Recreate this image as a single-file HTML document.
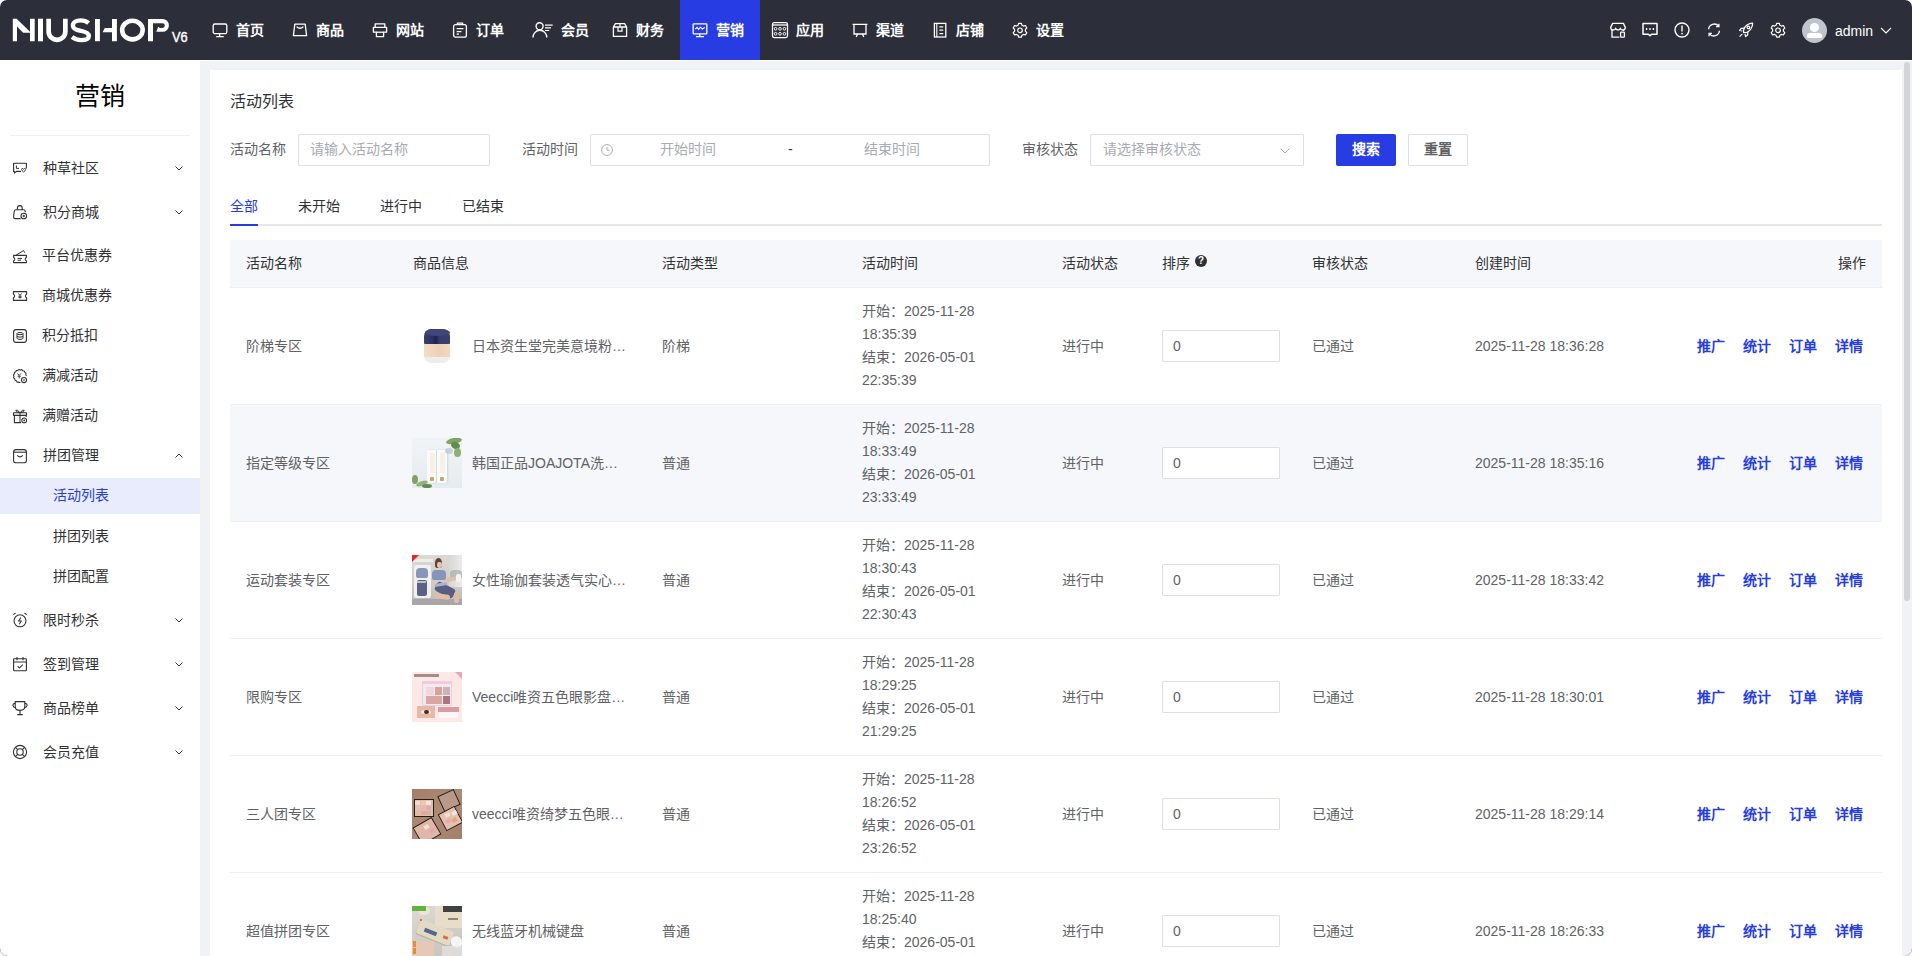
<!DOCTYPE html>
<html lang="zh-CN"><head><meta charset="utf-8">
<style>
*{box-sizing:border-box;margin:0;padding:0}
html,body{width:1912px;height:956px;overflow:hidden;background:#fff;font-family:"Liberation Sans",sans-serif;font-size:14px;color:#303133}
.a{position:absolute;white-space:nowrap}
.hdr{position:absolute;left:0;top:0;width:1912px;height:60px;background:#2c2f3a;border-radius:7px 7px 0 0;overflow:hidden}
.nt{position:absolute;top:20px;line-height:20px;color:#fff;font-weight:bold;font-size:14px}
.side{position:absolute;left:0;top:60px;width:200px;height:896px;background:#fff;border-radius:0 0 0 7px}
.mt{position:absolute;line-height:20px;font-size:14px;color:#303133;white-space:nowrap}
.main{position:absolute;left:200px;top:61px;width:1712px;height:895px;background:#f0f2f5}
.card{position:absolute;left:210px;top:70px;width:1692px;height:886px;background:#fff}
.lbl{position:absolute;line-height:20px;font-size:14px;color:#606266;white-space:nowrap}
.inp{position:absolute;height:32px;border:1px solid #dcdfe6;border-radius:1px;background:#fff}
.ph{position:absolute;line-height:20px;font-size:14px;color:#a8abb2;white-space:nowrap}
.th{position:absolute;top:253px;line-height:20px;font-size:14px;color:#303133;font-weight:normal;white-space:nowrap}
.td{position:absolute;line-height:20px;font-size:14px;color:#606266;white-space:nowrap}
.op{position:absolute;line-height:20px;font-size:14px;color:#273de3;font-weight:bold;white-space:nowrap}
</style></head><body>
<div class="hdr"><div style="position:absolute;left:680px;top:0;width:80px;height:60px;background:#273de3"></div><svg style="position:absolute;left:0;top:0" width="200" height="60" viewBox="0 0 200 60"><path fill="#fff" d="M12.8 18.7H16.6L30 31.7V18.7H34.7V41.3H30V32.8H23.2L17 26.4V41.3H12.8Z"/><rect fill="#fff" x="38" y="18.7" width="5" height="22.6"/><path fill="#fff" d="M46.3 18.7H51V31.5A6 6 0 0 0 63 31.5V18.7H67.7V31.5A10.7 10.7 0 0 1 46.3 31.5Z"/><path fill="none" stroke="#fff" stroke-width="4.4" d="M88.6 23.2C86.5 21.4 83.6 20.4 80.6 20.4C76 20.4 72.9 22.4 72.9 25.7C72.9 29 76.5 30 80.8 30.8C85.2 31.6 88.8 32.6 88.8 36C88.8 39 85.5 40.1 81 40.1C77.5 40.1 74.6 39.1 72 37.1"/><rect fill="#fff" x="95" y="19" width="4.9" height="22.2"/><path fill="#fff" d="M102.6 32.3L104.8 27.9H112V19H116.9V41.2H112V32.3Z"/><ellipse cx="132.4" cy="30.05" rx="10.25" ry="9.35" fill="none" stroke="#fff" stroke-width="4.6"/><path fill="#fff" d="M148 19H162.5A6.4 6.4 0 0 1 162.5 31.8H156.2L158.3 26.8L159.8 27.9H162.5A2.35 2.35 0 0 0 162.5 23.2H153V41.2H148Z"/><text x="172" y="41.6" fill="#fff" stroke="#fff" stroke-width="0.45" font-family="Liberation Sans" font-size="14.4" textLength="15.6" lengthAdjust="spacingAndGlyphs">V6</text></svg><svg style="position:absolute;left:212px;top:22px;width:16px;height:16px;overflow:visible" viewBox="0 0 16 16" ><rect x="1.2" y="2" width="13.6" height="9.6" rx="1.6" fill="none" stroke="#fff" stroke-width="1.3"/><path d="M7.7 11.6V14.2M4.2 14.6H11.8" stroke="#fff" stroke-width="1.3" fill="none"/></svg><div class="nt" style="left:236px">首页</div><svg style="position:absolute;left:292px;top:22px;width:16px;height:16px;overflow:visible" viewBox="0 0 16 16" ><path d="M2.8 2.2H13.2L14.6 13.6H1.4Z" fill="none" stroke="#fff" stroke-width="1.3" stroke-linejoin="round"/><path d="M4.6 4.6Q8 8 11.4 4.6" fill="none" stroke="#fff" stroke-width="1.3"/></svg><div class="nt" style="left:316px">商品</div><svg style="position:absolute;left:372px;top:22px;width:16px;height:16px;overflow:visible" viewBox="0 0 16 16" ><path d="M3.2 5.4V1.8H12.8V5.4M1.4 5.4H14.6V10.2H11.6V14.6H4.4V10.2H1.4Z" fill="none" stroke="#fff" stroke-width="1.3" stroke-linejoin="round"/><path d="M4.4 10.2H11.6" stroke="#fff" stroke-width="1.3"/></svg><div class="nt" style="left:396px">网站</div><svg style="position:absolute;left:452px;top:22px;width:16px;height:16px;overflow:visible" viewBox="0 0 16 16" ><rect x="1.6" y="2.6" width="12.8" height="12.6" rx="2" fill="none" stroke="#fff" stroke-width="1.3"/><path d="M5.4 2.6V1.2H10.6V2.6M4.6 6.6H11.4M4.6 9.6H9.4M4.6 12.2H7" fill="none" stroke="#fff" stroke-width="1.3"/></svg><div class="nt" style="left:476px">订单</div><svg style="position:absolute;left:532px;top:22px;width:16px;height:16px;overflow:visible" viewBox="0 0 16 16" ><circle cx="7.6" cy="4.2" r="3.5" fill="none" stroke="#fff" stroke-width="1.4"/><path d="M1 15.6A6.9 7.4 0 0 1 14.8 15.6" fill="none" stroke="#fff" stroke-width="1.4"/><path d="M13 3.1H20.7M13 5.9H19M13 8.5H17.2" fill="none" stroke="#fff" stroke-width="1.2"/></svg><div class="nt" style="left:560.5px">会员</div><svg style="position:absolute;left:612px;top:22px;width:16px;height:16px;overflow:visible" viewBox="0 0 16 16" ><path d="M1.4 5L3.4 1.6H12.6L14.6 5V14.4H1.4Z M1.4 5H14.6" fill="none" stroke="#fff" stroke-width="1.3" stroke-linejoin="round"/><path d="M6 5V9.2H10V5M8 1.6V5" fill="none" stroke="#fff" stroke-width="1.2"/></svg><div class="nt" style="left:636px">财务</div><svg style="position:absolute;left:692px;top:22px;width:16px;height:16px;overflow:visible" viewBox="0 0 16 16" ><rect x="1.2" y="1.8" width="13.6" height="10" rx="0.6" fill="none" stroke="#fff" stroke-width="1.3"/><path d="M3.2 7.2L5 5.4L6.6 7.4L8.4 5.2L10.4 7L12.8 5.4" fill="none" stroke="#fff" stroke-width="1.1"/><path d="M7.8 11.8V14M4 14.6H12" stroke="#fff" stroke-width="1.3"/></svg><div class="nt" style="left:716px">营销</div><svg style="position:absolute;left:772px;top:22px;width:16px;height:16px;overflow:visible" viewBox="0 0 16 16" ><rect x="0.5" y="0.6" width="15" height="15" rx="1.8" fill="none" stroke="#fff" stroke-width="1.3"/><path d="M0.5 3H15.5" stroke="#fff" stroke-width="1.3"/><g fill="none" stroke="#fff" stroke-width="0.95"><circle cx="3.6" cy="6.8" r="1.35"/><circle cx="8" cy="6.8" r="1.35"/><circle cx="12.4" cy="6.8" r="1.35"/><circle cx="3.6" cy="11.8" r="1.35"/><circle cx="8" cy="11.8" r="1.35"/><circle cx="12.4" cy="11.8" r="1.35"/></g></svg><div class="nt" style="left:796px">应用</div><svg style="position:absolute;left:852px;top:22px;width:16px;height:16px;overflow:visible" viewBox="0 0 16 16" ><path d="M0.6 2.4H15.4M2 2.4V12H14V2.4M5.6 12L4.2 15M10.4 12L11.8 15" fill="none" stroke="#fff" stroke-width="1.3"/></svg><div class="nt" style="left:876px">渠道</div><svg style="position:absolute;left:932px;top:22px;width:16px;height:16px;overflow:visible" viewBox="0 0 16 16" ><rect x="2.4" y="1.4" width="11.4" height="13.6" fill="none" stroke="#fff" stroke-width="1.3"/><path d="M4.8 1.4V15" stroke="#fff" stroke-width="1.1"/><path d="M7.4 4.8H11.2M7.4 8.2H11.2M7.4 11.6H11.2" stroke="#fff" stroke-width="1.2"/></svg><div class="nt" style="left:956px">店铺</div><svg style="position:absolute;left:1012px;top:22px;width:16px;height:16px;overflow:visible" viewBox="0 0 16 16" ><path d="M6.6 1.3H9.4L9.9 3.2L11.5 4.1L13.4 3.5L14.8 6L13.4 7.4V9.2L14.8 10.6L13.4 13L11.5 12.4L9.9 13.3L9.4 15.2H6.6L6.1 13.3L4.5 12.4L2.6 13L1.2 10.6L2.6 9.2V7.4L1.2 6L2.6 3.5L4.5 4.1L6.1 3.2Z" fill="none" stroke="#fff" stroke-width="1.2" stroke-linejoin="round"/><circle cx="8" cy="8.3" r="2.3" fill="none" stroke="#fff" stroke-width="1.2"/></svg><div class="nt" style="left:1036px">设置</div><svg style="position:absolute;left:1610px;top:22px;width:16px;height:16px;overflow:visible" viewBox="0 0 16 16" ><path d="M2.6 1.4H13.4L15.4 5.6Q15 8 12.8 8Q10.6 8 10.4 6.2Q10 8 8 8Q6 8 5.6 6.2Q5.4 8 3.2 8Q1 8 0.6 5.6Z" fill="none" stroke="#fff" stroke-width="1.3" stroke-linejoin="round"/><path d="M2 8V15.2H9.4M13.6 8V9" fill="none" stroke="#fff" stroke-width="1.3"/><rect x="10.6" y="10.2" width="3.8" height="5" rx="0.6" fill="none" stroke="#fff" stroke-width="1.3"/></svg><svg style="position:absolute;left:1642px;top:22px;width:16px;height:16px;overflow:visible" viewBox="0 0 16 16" ><path d="M1 1.6H15V12.2H9.6L8 13.8L6.4 12.2H1Z" fill="none" stroke="#fff" stroke-width="1.5" stroke-linejoin="round"/><circle cx="4.6" cy="7" r="0.9" fill="#fff"/><circle cx="8" cy="7" r="0.9" fill="#fff"/><circle cx="11.4" cy="7" r="0.9" fill="#fff"/></svg><svg style="position:absolute;left:1674px;top:22px;width:16px;height:16px;overflow:visible" viewBox="0 0 16 16" ><circle cx="8" cy="8" r="7" fill="none" stroke="#fff" stroke-width="1.4"/><path d="M8 3.6V9.6" stroke="#fff" stroke-width="1.4"/><circle cx="8" cy="11.6" r="0.9" fill="#fff"/></svg><svg style="position:absolute;left:1706px;top:22px;width:16px;height:16px;overflow:visible" viewBox="0 0 16 16" ><path d="M2.6 7.2A5.6 5.6 0 0 1 12.6 4.2M13.4 8.8A5.6 5.6 0 0 1 3.4 11.8" fill="none" stroke="#fff" stroke-width="1.3"/><path d="M12.9 1.8V4.6H10.1M3.1 14.2V11.4H5.9" fill="none" stroke="#fff" stroke-width="1.3"/></svg><svg style="position:absolute;left:1738px;top:22px;width:16px;height:16px;overflow:visible" viewBox="0 0 16 16" ><path d="M5.6 10.6Q5 6 9 3Q12 1 14.6 1.2Q14.8 4 12.8 7Q10 11 5.6 10.6Z" fill="none" stroke="#fff" stroke-width="1.3" stroke-linejoin="round"/><circle cx="10.4" cy="5.4" r="1.3" fill="none" stroke="#fff" stroke-width="1.2"/><path d="M6.2 6.2L3.2 6.4L1.6 8.4L4.4 9M9.8 10L9.6 13L7.6 14.6L7 11.8M4.4 11.8L1.6 14.6" fill="none" stroke="#fff" stroke-width="1.2" stroke-linejoin="round"/></svg><svg style="position:absolute;left:1770px;top:22px;width:16px;height:16px;overflow:visible" viewBox="0 0 16 16" ><path d="M6.6 1.3H9.4L9.9 3.2L11.5 4.1L13.4 3.5L14.8 6L13.4 7.4V9.2L14.8 10.6L13.4 13L11.5 12.4L9.9 13.3L9.4 15.2H6.6L6.1 13.3L4.5 12.4L2.6 13L1.2 10.6L2.6 9.2V7.4L1.2 6L2.6 3.5L4.5 4.1L6.1 3.2Z" fill="none" stroke="#fff" stroke-width="1.2" stroke-linejoin="round"/><circle cx="8" cy="8.3" r="2.3" fill="none" stroke="#fff" stroke-width="1.2"/></svg><div style="position:absolute;left:1802px;top:17.5px;width:25px;height:25px;border-radius:50%;background:#c0c4cc;overflow:hidden"><div style="position:absolute;left:8px;top:5px;width:9px;height:9px;border-radius:50%;background:#fff"></div><div style="position:absolute;left:5px;top:15.5px;width:15px;height:5px;border-radius:3px 3px 1px 1px;background:#fff"></div></div><div class="a" style="left:1835px;top:20.5px;line-height:20px;color:#fff;font-size:14px">admin</div><svg style="position:absolute;left:1880px;top:27px;width:12px;height:7px;overflow:visible" viewBox="0 0 12 7" ><path d="M1 1L6 6L11 1" fill="none" stroke="#fff" stroke-width="1.2"/></svg></div><div class="side"><div class="a" style="left:0;top:0;width:200px;text-align:center;font-size:25px;line-height:36px;top:18px;color:#000">营销</div><div style="position:absolute;left:10px;top:75px;width:180px;height:1px;background:#ebeef5"></div></div><div style="position:absolute;left:0;top:478px;width:200px;height:36px;background:#e9ecfc"></div><svg style="position:absolute;left:12px;top:160.8px;width:16px;height:16px;overflow:visible" viewBox="0 0 16 16" ><path d="M9 10.4H4.4L2.4 12.2V10.4H1.6V2.2H14.4V7.4" fill="none" stroke="#303133" stroke-width="1.1" stroke-linejoin="round"/><path d="M4.4 4.6V7.4H7" fill="none" stroke="#303133" stroke-width="1"/><path d="M9.6 8.4Q9.6 7.2 10.8 7.6L11.6 8.2L12.4 7.6Q13.6 7.2 13.6 8.4Q13.6 9.6 11.6 11Q9.6 9.6 9.6 8.4Z" fill="none" stroke="#303133" stroke-width="1"/></svg><div class="mt" style="left:43px;top:158.0px">种草社区</div><svg style="position:absolute;left:175px;top:166.0px;width:8px;height:5px;overflow:visible" viewBox="0 0 8 5" ><path d="M0.5 0.5L4 4L7.5 0.5" fill="none" stroke="#303133" stroke-width="1"/></svg><svg style="position:absolute;left:12px;top:204.3px;width:16px;height:16px;overflow:visible" viewBox="0 0 16 16" ><path d="M8.6 14.6H3.2Q1.6 14.6 1.6 13L2.2 7.4Q2.4 5.8 4 5.8H11.6Q13 5.8 13.2 7.2L13.3 8.2M5.4 5.8V4Q5.4 1.6 7.8 1.6Q10.2 1.6 10.2 4V5.8" fill="none" stroke="#303133" stroke-width="1.1"/><circle cx="11.8" cy="12" r="2.8" fill="none" stroke="#303133" stroke-width="1.1"/><path d="M11.8 10.8V13.2M10.6 12H13" stroke="#303133" stroke-width="1"/></svg><div class="mt" style="left:43px;top:201.5px">积分商城</div><svg style="position:absolute;left:175px;top:209.5px;width:8px;height:5px;overflow:visible" viewBox="0 0 8 5" ><path d="M0.5 0.5L4 4L7.5 0.5" fill="none" stroke="#303133" stroke-width="1"/></svg><svg style="position:absolute;left:12px;top:247.8px;width:16px;height:16px;overflow:visible" viewBox="0 0 16 16" ><path d="M1.6 7.4H14.4V9.6Q13.2 10 13.2 11.2Q13.2 12.4 14.4 12.8V14.6H1.6V12.8Q2.8 12.4 2.8 11.2Q2.8 10 1.6 9.6Z" fill="none" stroke="#303133" stroke-width="1.1" stroke-linejoin="round"/><path d="M3.6 7.4L11.6 2.6L12.8 4.8M5.6 10.4H10M5.6 12.2H9" fill="none" stroke="#303133" stroke-width="1"/></svg><div class="mt" style="left:41.5px;top:245.0px">平台优惠券</div><svg style="position:absolute;left:12px;top:287.8px;width:16px;height:16px;overflow:visible" viewBox="0 0 16 16" ><path d="M1.4 3.6H14.6V6.2Q13.4 6.8 13.4 8Q13.4 9.2 14.6 9.8V12.4H1.4V9.8Q2.6 9.2 2.6 8Q2.6 6.8 1.4 6.2Z" fill="none" stroke="#303133" stroke-width="1.1" stroke-linejoin="round"/><path d="M6.4 5.4L8 7.4L9.6 5.4M8 7.4V10.6M6.4 8.2H9.6M6.4 9.4H9.6" fill="none" stroke="#303133" stroke-width="0.9"/></svg><div class="mt" style="left:41.5px;top:285.0px">商城优惠券</div><svg style="position:absolute;left:12px;top:327.8px;width:16px;height:16px;overflow:visible" viewBox="0 0 16 16" ><rect x="1.6" y="1.6" width="12.8" height="12.8" rx="2.4" fill="none" stroke="#303133" stroke-width="1.1"/><ellipse cx="8" cy="5.6" rx="3" ry="1.1" fill="none" stroke="#303133" stroke-width="1"/><path d="M5 5.6V10.2Q5 11.4 8 11.4Q11 11.4 11 10.2V5.6M5 8Q5 9.1 8 9.1Q11 9.1 11 8" fill="none" stroke="#303133" stroke-width="1"/></svg><div class="mt" style="left:41.5px;top:325.0px">积分抵扣</div><svg style="position:absolute;left:12px;top:367.8px;width:16px;height:16px;overflow:visible" viewBox="0 0 16 16" ><path d="M8.4 14.2Q7.6 14.8 6.6 14L5.2 14.2L4.4 12.8L3 12.2L2.8 10.8L1.6 9.8L2 8.4L1.4 7L2.4 5.8L2.4 4.4L3.8 3.8L4.4 2.4L5.8 2.4L7 1.4L8.4 2L9.8 1.6L10.8 2.8L12.2 3L12.8 4.4L14 5.2L13.8 6.6L14.4 8" fill="none" stroke="#303133" stroke-width="1.05" stroke-linejoin="round"/><path d="M5.4 5.4L7.2 7.4L9 5.4M7.2 7.4V10.4M5.6 8.2H8.8" fill="none" stroke="#303133" stroke-width="0.9"/><circle cx="12" cy="12" r="2.6" fill="none" stroke="#303133" stroke-width="1.05"/><path d="M10.9 12H13.1" stroke="#303133" stroke-width="1"/></svg><div class="mt" style="left:41.5px;top:365.0px">满减活动</div><svg style="position:absolute;left:12px;top:407.8px;width:16px;height:16px;overflow:visible" viewBox="0 0 16 16" ><path d="M9 14.6H2.4V7.4H14.2V9M1.6 4.8H14.4V7.4H1.6Z" fill="none" stroke="#303133" stroke-width="1.1" stroke-linejoin="round"/><path d="M8 4.8V14.6M8 4.8Q5 0.6 3.8 2.4Q3 3.8 8 4.8Q13 3.8 12.2 2.4Q11 0.6 8 4.8" fill="none" stroke="#303133" stroke-width="1"/><circle cx="12.2" cy="12.4" r="2.4" fill="none" stroke="#303133" stroke-width="1.05"/><circle cx="12.2" cy="12.4" r="0.9" fill="#303133"/></svg><div class="mt" style="left:41.5px;top:405.0px">满赠活动</div><svg style="position:absolute;left:12px;top:447.8px;width:16px;height:16px;overflow:visible" viewBox="0 0 16 16" ><rect x="1.6" y="1.6" width="12.8" height="13.2" rx="2.4" fill="none" stroke="#303133" stroke-width="1.1"/><path d="M1.6 4.2H14.4" stroke="#303133" stroke-width="1.1"/><path d="M5.2 7.4Q8 10.4 10.8 7.4" fill="none" stroke="#303133" stroke-width="1.1"/></svg><div class="mt" style="left:43px;top:445.0px">拼团管理</div><svg style="position:absolute;left:175px;top:452.5px;width:8px;height:5px;overflow:visible" viewBox="0 0 8 5" ><path d="M0.5 4.5L4 1L7.5 4.5" fill="none" stroke="#303133" stroke-width="1"/></svg><svg style="position:absolute;left:12px;top:612.3px;width:16px;height:16px;overflow:visible" viewBox="0 0 16 16" ><circle cx="8" cy="8.8" r="6" fill="none" stroke="#303133" stroke-width="1.1"/><path d="M1.4 2.6Q2.4 1.4 3.6 1.2M14.6 2.6Q13.6 1.4 12.4 1.2" fill="none" stroke="#303133" stroke-width="1.1"/><path d="M8.8 5.6L6.6 9H9.4L7.2 12.2" fill="none" stroke="#303133" stroke-width="1.05" stroke-linejoin="round"/></svg><div class="mt" style="left:43px;top:609.5px">限时秒杀</div><svg style="position:absolute;left:175px;top:617.5px;width:8px;height:5px;overflow:visible" viewBox="0 0 8 5" ><path d="M0.5 0.5L4 4L7.5 0.5" fill="none" stroke="#303133" stroke-width="1"/></svg><svg style="position:absolute;left:12px;top:656.3px;width:16px;height:16px;overflow:visible" viewBox="0 0 16 16" ><rect x="1.6" y="2.8" width="12.8" height="12" rx="0.6" fill="none" stroke="#303133" stroke-width="1.1"/><path d="M1.6 6H14.4M5 1V4.2M11 1V4.2" fill="none" stroke="#303133" stroke-width="1.1"/><path d="M5.6 10.2L7.4 12L10.8 8.6" fill="none" stroke="#303133" stroke-width="1.05"/></svg><div class="mt" style="left:43px;top:653.5px">签到管理</div><svg style="position:absolute;left:175px;top:661.5px;width:8px;height:5px;overflow:visible" viewBox="0 0 8 5" ><path d="M0.5 0.5L4 4L7.5 0.5" fill="none" stroke="#303133" stroke-width="1"/></svg><svg style="position:absolute;left:12px;top:700.3px;width:16px;height:16px;overflow:visible" viewBox="0 0 16 16" ><path d="M3.2 1.6H12.8V6.6Q12.8 10.4 8 10.4Q3.2 10.4 3.2 6.6Z" fill="none" stroke="#303133" stroke-width="1.1"/><path d="M3.2 3.4Q0.8 3.4 1 5.6Q1.4 7.6 3.6 7.8M12.8 3.4Q15.2 3.4 15 5.6Q14.6 7.6 12.4 7.8M8 10.4V14.6M5.2 14.6H10.8" fill="none" stroke="#303133" stroke-width="1.1"/></svg><div class="mt" style="left:43px;top:697.5px">商品榜单</div><svg style="position:absolute;left:175px;top:705.5px;width:8px;height:5px;overflow:visible" viewBox="0 0 8 5" ><path d="M0.5 0.5L4 4L7.5 0.5" fill="none" stroke="#303133" stroke-width="1"/></svg><svg style="position:absolute;left:12px;top:744.3px;width:16px;height:16px;overflow:visible" viewBox="0 0 16 16" ><circle cx="8" cy="8" r="6.6" fill="none" stroke="#303133" stroke-width="1.1"/><circle cx="8" cy="8" r="3.2" fill="none" stroke="#303133" stroke-width="1.1"/><path d="M3.4 3.4L5.7 5.7M12.6 3.4L10.3 5.7M3.4 12.6L5.7 10.3M12.6 12.6L10.3 10.3" stroke="#303133" stroke-width="1.1"/></svg><div class="mt" style="left:43px;top:741.5px">会员充值</div><svg style="position:absolute;left:175px;top:749.5px;width:8px;height:5px;overflow:visible" viewBox="0 0 8 5" ><path d="M0.5 0.5L4 4L7.5 0.5" fill="none" stroke="#303133" stroke-width="1"/></svg><div class="mt" style="left:53px;top:485.0px;color:#273de3">活动列表</div><div class="mt" style="left:53px;top:525.5px;color:#303133">拼团列表</div><div class="mt" style="left:53px;top:565.5px;color:#303133">拼团配置</div><div class="main"></div><div class="card"></div><div class="a" style="left:230px;top:91px;font-size:16px;line-height:22px;color:#303133">活动列表</div><div class="lbl" style="left:230px;top:138.7px">活动名称</div><div class="inp" style="left:298px;top:134px;width:192px"></div><div class="ph" style="left:309.5px;top:138.7px">请输入活动名称</div><div class="lbl" style="left:522px;top:138.7px">活动时间</div><div class="inp" style="left:590px;top:134px;width:400px"></div><svg style="position:absolute;left:601px;top:143.8px;width:12px;height:12px;overflow:visible" viewBox="0 0 12 12" ><circle cx="6" cy="6" r="5.4" fill="none" stroke="#a8abb2" stroke-width="1"/><path d="M6 3V6.2H8.6" fill="none" stroke="#a8abb2" stroke-width="1"/></svg><div class="ph" style="left:660px;top:138.7px">开始时间</div><div class="a" style="left:788px;top:138.7px;line-height:20px;color:#303133">-</div><div class="ph" style="left:864px;top:138.7px">结束时间</div><div class="lbl" style="left:1022px;top:138.7px">审核状态</div><div class="inp" style="left:1090px;top:134px;width:214px"></div><div class="ph" style="left:1102.5px;top:138.7px">请选择审核状态</div><svg style="position:absolute;left:1280px;top:147.5px;width:10px;height:6px;overflow:visible" viewBox="0 0 10 6" ><path d="M0.5 0.5L5 5L9.5 0.5" fill="none" stroke="#a8abb2" stroke-width="1"/></svg><div style="position:absolute;left:1336px;top:134px;width:60px;height:32px;background:#273de3;border-radius:2px"></div><div class="a" style="left:1352px;top:138.7px;line-height:20px;color:#fff;font-weight:bold">搜索</div><div class="inp" style="left:1408px;top:134px;width:60px"></div><div class="a" style="left:1424px;top:138.7px;line-height:20px;color:#606266;font-weight:bold">重置</div><div style="position:absolute;left:230px;top:224px;width:1652px;height:2px;background:#e4e7ed"></div><div style="position:absolute;left:230px;top:224px;width:28px;height:2px;background:#273de3"></div><div class="a" style="left:230px;top:196px;line-height:20px;color:#273de3">全部</div><div class="a" style="left:298px;top:196px;line-height:20px;color:#303133">未开始</div><div class="a" style="left:380px;top:196px;line-height:20px;color:#303133">进行中</div><div class="a" style="left:462px;top:196px;line-height:20px;color:#303133">已结束</div><div style="position:absolute;left:230px;top:240px;width:1652px;height:48px;background:#f5f7fa;border-bottom:1px solid #ebeef5"></div><div class="th" style="left:246px">活动名称</div><div class="th" style="left:412.5px">商品信息</div><div class="th" style="left:662px">活动类型</div><div class="th" style="left:862px">活动时间</div><div class="th" style="left:1062px">活动状态</div><div class="th" style="left:1162px">排序</div><div class="th" style="left:1312px">审核状态</div><div class="th" style="left:1475px">创建时间</div><div class="th" style="left:1838px">操作</div><div style="position:absolute;left:1195px;top:254.5px;width:12px;height:12px;border-radius:50%;background:#303133;color:#fff;font-size:10px;line-height:12px;text-align:center;font-weight:bold">?</div><div style="position:absolute;left:230px;top:288px;width:1652px;height:117px;background:#fff;border-bottom:1px solid #ebeef5"></div><div class="td" style="left:246px;top:336px">阶梯专区</div><div style="position:absolute;left:412px;top:321px;width:50px;height:50px;overflow:hidden"><div style="position:absolute;left:0;top:0;width:50px;height:50px;background:#fff"></div><div style="position:absolute;left:12px;top:35px;width:26px;height:7px;background:#efedeb;border-radius:0 0 7px 7px"></div><div style="position:absolute;left:12px;top:22px;width:26px;height:14px;background:linear-gradient(90deg,#f5dcc6,#efcfb5 60%,#f3d8c2)"></div><div style="position:absolute;left:12px;top:7.5px;width:26px;height:15.5px;background:linear-gradient(90deg,#3a3f72,#2a2f63 35%,#1c2055 45%,#363b6e 60%,#3a3f72);border-radius:7px 7px 1px 1px"></div><div style="position:absolute;left:12.5px;top:7.5px;width:25px;height:7px;background:#41467a;border-radius:50%"></div></div><div class="td" style="left:472px;top:336px">日本资生堂完美意境粉…</div><div class="td" style="left:662px;top:336px">阶梯</div><div class="td" style="left:862px;top:300px;line-height:23px">开始：2025-11-28<br>18:35:39<br>结束：2026-05-01<br>22:35:39</div><div class="td" style="left:1062px;top:336px">进行中</div><div class="inp" style="left:1162px;top:330px;width:118px"></div><div class="td" style="left:1173px;top:336px">0</div><div class="td" style="left:1312px;top:336px">已通过</div><div class="td" style="left:1475px;top:336px">2025-11-28 18:36:28</div><div class="op" style="left:1697px;top:336px">推广</div><div class="op" style="left:1743px;top:336px">统计</div><div class="op" style="left:1789px;top:336px">订单</div><div class="op" style="left:1835px;top:336px">详情</div><div style="position:absolute;left:230px;top:405px;width:1652px;height:117px;background:#f5f7fa;border-bottom:1px solid #ebeef5"></div><div class="td" style="left:246px;top:453px">指定等级专区</div><div style="position:absolute;left:412px;top:438px;width:50px;height:50px;overflow:hidden"><div style="position:absolute;left:0px;top:0px;width:50px;height:50px;background:linear-gradient(180deg,#f1f4f6,#e6ebef);"></div><div style="position:absolute;left:14.5px;top:12px;width:9.5px;height:33px;background:#fafafa;border-radius:1px 1px 2px 2px;box-shadow:1px 0 2px rgba(150,160,175,.35)"></div><div style="position:absolute;left:24.8px;top:12px;width:10px;height:33px;background:#fafafa;border-radius:1px 1px 2px 2px;box-shadow:1px 0 2px rgba(150,160,175,.35)"></div><div style="position:absolute;left:18px;top:38.5px;width:4px;height:4px;background:#c7a46a;border-radius:1px"></div><div style="position:absolute;left:28px;top:38.5px;width:4px;height:4px;background:#c7a46a;border-radius:1px"></div><div style="position:absolute;left:17.5px;top:15px;width:5px;height:20px;background:#f3ead9;opacity:.6"></div><div style="position:absolute;left:27.5px;top:15px;width:5px;height:20px;background:#f3ead9;opacity:.6"></div><div style="position:absolute;left:34px;top:0px;width:16px;height:6px;background:#7ea463;border-radius:50%;transform:rotate(-10deg)"></div><div style="position:absolute;left:39px;top:4px;width:9px;height:7px;background:#5f8d4a;border-radius:50%;transform:rotate(30deg)"></div><div style="position:absolute;left:42px;top:10px;width:7px;height:9px;background:#8db070;border-radius:50%"></div><div style="position:absolute;left:33px;top:10px;width:8px;height:6px;background:#b9cbd9;border-radius:50%;opacity:.8"></div><div style="position:absolute;left:0px;top:37px;width:6px;height:9px;background:#7fa164;border-radius:50%"></div><div style="position:absolute;left:4px;top:43px;width:12px;height:5px;background:#93b37a;border-radius:50%;transform:rotate(-20deg)"></div><div style="position:absolute;left:10px;top:46px;width:10px;height:4px;background:#5f8d4a;border-radius:50%"></div></div><div class="td" style="left:472px;top:453px">韩国正品JOAJOTA洗…</div><div class="td" style="left:662px;top:453px">普通</div><div class="td" style="left:862px;top:417px;line-height:23px">开始：2025-11-28<br>18:33:49<br>结束：2026-05-01<br>23:33:49</div><div class="td" style="left:1062px;top:453px">进行中</div><div class="inp" style="left:1162px;top:447px;width:118px"></div><div class="td" style="left:1173px;top:453px">0</div><div class="td" style="left:1312px;top:453px">已通过</div><div class="td" style="left:1475px;top:453px">2025-11-28 18:35:16</div><div class="op" style="left:1697px;top:453px">推广</div><div class="op" style="left:1743px;top:453px">统计</div><div class="op" style="left:1789px;top:453px">订单</div><div class="op" style="left:1835px;top:453px">详情</div><div style="position:absolute;left:230px;top:522px;width:1652px;height:117px;background:#fff;border-bottom:1px solid #ebeef5"></div><div class="td" style="left:246px;top:570px">运动套装专区</div><div style="position:absolute;left:412px;top:555px;width:50px;height:50px;overflow:hidden"><div style="position:absolute;left:0px;top:0px;width:50px;height:50px;background:linear-gradient(180deg,#dcd8d2,#cfcbc5 60%,#b9b6b4);"></div><div style="position:absolute;left:37px;top:0px;width:13px;height:32px;background:linear-gradient(90deg,#d9d7d2,#ecebee);"></div><div style="position:absolute;left:38px;top:15px;width:12px;height:8px;background:#9aa79a;border-radius:40% 40% 0 0;opacity:.6"></div><div style="position:absolute;left:0px;top:44px;width:50px;height:6px;background:#a9a6aa;"></div><div style="position:absolute;left:1.5px;top:10px;width:17px;height:33px;background:#f2f1f0;border-radius:2px"></div><div style="position:absolute;left:4px;top:13px;width:12px;height:10px;background:#8797ba;border-radius:4px 4px 2px 2px"></div><div style="position:absolute;left:5px;top:25px;width:10px;height:16px;background:#5b6284;border-radius:2px"></div><div style="position:absolute;left:5px;top:26px;width:9px;height:2px;background:#b9bfd4;"></div><div style="position:absolute;left:1px;top:4px;width:20px;height:3px;background:#f4f4f6;opacity:.8"></div><div style="position:absolute;left:0px;top:0px;width:7px;height:7px;background:#e3262d;clip-path:polygon(0 0,100% 0,0 100%)"></div><div style="position:absolute;left:23px;top:3px;width:7px;height:10px;background:#5b4439;border-radius:50% 50% 30% 30%"></div><div style="position:absolute;left:24.5px;top:7px;width:5px;height:6px;background:#e6c3ae;border-radius:40%"></div><div style="position:absolute;left:20px;top:15px;width:14px;height:10px;background:#8595ba;border-radius:4px 4px 2px 2px"></div><div style="position:absolute;left:33px;top:22px;width:15px;height:4px;background:#e2c0aa;transform:rotate(-12deg);border-radius:2px"></div><div style="position:absolute;left:44px;top:19px;width:5px;height:8px;background:#f4f4f5;border-radius:2px"></div><div style="position:absolute;left:23px;top:30px;width:20px;height:10px;background:#575e80;transform:rotate(28deg);border-radius:3px"></div><div style="position:absolute;left:23px;top:28px;width:12px;height:3px;background:#aab3cc;transform:rotate(-10deg)"></div><div style="position:absolute;left:22px;top:39px;width:16px;height:5px;background:#e3bea6;border-radius:3px;transform:rotate(8deg)"></div><div style="position:absolute;left:42px;top:37px;width:5px;height:11px;background:#e1bca5;border-radius:2px"></div></div><div class="td" style="left:472px;top:570px">女性瑜伽套装透气实心…</div><div class="td" style="left:662px;top:570px">普通</div><div class="td" style="left:862px;top:534px;line-height:23px">开始：2025-11-28<br>18:30:43<br>结束：2026-05-01<br>22:30:43</div><div class="td" style="left:1062px;top:570px">进行中</div><div class="inp" style="left:1162px;top:564px;width:118px"></div><div class="td" style="left:1173px;top:570px">0</div><div class="td" style="left:1312px;top:570px">已通过</div><div class="td" style="left:1475px;top:570px">2025-11-28 18:33:42</div><div class="op" style="left:1697px;top:570px">推广</div><div class="op" style="left:1743px;top:570px">统计</div><div class="op" style="left:1789px;top:570px">订单</div><div class="op" style="left:1835px;top:570px">详情</div><div style="position:absolute;left:230px;top:639px;width:1652px;height:117px;background:#fff;border-bottom:1px solid #ebeef5"></div><div class="td" style="left:246px;top:687px">限购专区</div><div style="position:absolute;left:412px;top:672px;width:50px;height:50px;overflow:hidden"><div style="position:absolute;left:0px;top:0px;width:50px;height:50px;background:#fde8e6;"></div><div style="position:absolute;left:2px;top:2px;width:25px;height:2.5px;background:#7f6f72;opacity:.75"></div><div style="position:absolute;left:43px;top:0px;width:7px;height:7px;background:#e7a9ad;clip-path:polygon(0 0,100% 0,100% 100%)"></div><div style="position:absolute;left:10px;top:9px;width:30px;height:25px;background:#f1e8f0;border:1px solid #e3d3df;border-radius:1px"></div><div style="position:absolute;left:10px;top:9px;width:30px;height:3px;background:#f3c9dc;"></div><div style="position:absolute;left:14px;top:15px;width:8px;height:8px;background:#f1d7db;"></div><div style="position:absolute;left:22.5px;top:15px;width:7.5px;height:8px;background:#d8a19e;"></div><div style="position:absolute;left:30.5px;top:15px;width:7.5px;height:8px;background:#c9b4b6;"></div><div style="position:absolute;left:14px;top:24px;width:16px;height:7.5px;background:#dba5a1;"></div><div style="position:absolute;left:30.5px;top:24px;width:7.5px;height:7.5px;background:#a8767c;"></div><div style="position:absolute;left:5px;top:34px;width:18px;height:12px;background:#e5b8a7;"></div><div style="position:absolute;left:9px;top:38px;width:10px;height:4px;background:#f6ebe6;border-radius:50%"></div><div style="position:absolute;left:12px;top:38px;width:4.5px;height:4px;background:#4b2c24;border-radius:50%"></div><div style="position:absolute;left:26px;top:35px;width:21px;height:4.5px;background:#d99ca1;"></div><div style="position:absolute;left:27px;top:39.5px;width:19px;height:6px;background:#fbf7f7;"></div></div><div class="td" style="left:472px;top:687px">Veecci唯资五色眼影盘…</div><div class="td" style="left:662px;top:687px">普通</div><div class="td" style="left:862px;top:651px;line-height:23px">开始：2025-11-28<br>18:29:25<br>结束：2026-05-01<br>21:29:25</div><div class="td" style="left:1062px;top:687px">进行中</div><div class="inp" style="left:1162px;top:681px;width:118px"></div><div class="td" style="left:1173px;top:687px">0</div><div class="td" style="left:1312px;top:687px">已通过</div><div class="td" style="left:1475px;top:687px">2025-11-28 18:30:01</div><div class="op" style="left:1697px;top:687px">推广</div><div class="op" style="left:1743px;top:687px">统计</div><div class="op" style="left:1789px;top:687px">订单</div><div class="op" style="left:1835px;top:687px">详情</div><div style="position:absolute;left:230px;top:756px;width:1652px;height:117px;background:#fff;border-bottom:1px solid #ebeef5"></div><div class="td" style="left:246px;top:804px">三人团专区</div><div style="position:absolute;left:412px;top:789px;width:50px;height:50px;overflow:hidden"><div style="position:absolute;left:0px;top:0px;width:50px;height:50px;background:linear-gradient(135deg,#a47d67,#ad8a74 50%,#a47f69);"></div><div style="position:absolute;left:1.5px;top:10px;width:20px;height:18px;background:#dcc0b0;border:1.5px solid #231c1a"></div><div style="position:absolute;left:3px;top:12px;width:5px;height:4px;background:#f0dcc9;"></div><div style="position:absolute;left:8.5px;top:12px;width:5px;height:4px;background:#efc8ad;"></div><div style="position:absolute;left:14px;top:12px;width:5px;height:4px;background:#f3e4e6;"></div><div style="position:absolute;left:3px;top:17px;width:5px;height:4px;background:#e5c3b4;"></div><div style="position:absolute;left:8.5px;top:17px;width:5px;height:4px;background:#eab6ae;"></div><div style="position:absolute;left:14px;top:17px;width:5px;height:4px;background:#e9a6ab;"></div><div style="position:absolute;left:3px;top:22px;width:5px;height:4px;background:#e3b9a2;"></div><div style="position:absolute;left:8.5px;top:22px;width:5px;height:4px;background:#e7a993;"></div><div style="position:absolute;left:14px;top:22px;width:5px;height:4px;background:#d9b1a3;"></div><div style="position:absolute;left:28px;top:3px;width:18px;height:17px;background:#b9998a;border:1.5px solid #231c1a;transform:rotate(-25deg)"></div><div style="position:absolute;left:29px;top:20px;width:19px;height:19px;background:#e5c2ae;border:1.5px solid #231c1a;transform:rotate(-28deg)"></div><div style="position:absolute;left:33px;top:24px;width:5px;height:4px;background:#f2dfd0;transform:rotate(-28deg)"></div><div style="position:absolute;left:40px;top:22px;width:5px;height:4px;background:#f3e2e6;transform:rotate(-28deg)"></div><div style="position:absolute;left:34px;top:30px;width:5px;height:4px;background:#eaa9ad;transform:rotate(-28deg)"></div><div style="position:absolute;left:40px;top:29px;width:5px;height:4px;background:#e2a77d;transform:rotate(-28deg)"></div><div style="position:absolute;left:4px;top:32px;width:22px;height:20px;background:#dfb7a6;border:1.5px solid #231c1a;transform:rotate(-30deg)"></div><div style="position:absolute;left:12px;top:36px;width:5px;height:4px;background:#f2e0d6;transform:rotate(-30deg)"></div><div style="position:absolute;left:18px;top:40px;width:5px;height:4px;background:#e8a4aa;transform:rotate(-30deg)"></div></div><div class="td" style="left:472px;top:804px">veecci唯资绮梦五色眼…</div><div class="td" style="left:662px;top:804px">普通</div><div class="td" style="left:862px;top:768px;line-height:23px">开始：2025-11-28<br>18:26:52<br>结束：2026-05-01<br>23:26:52</div><div class="td" style="left:1062px;top:804px">进行中</div><div class="inp" style="left:1162px;top:798px;width:118px"></div><div class="td" style="left:1173px;top:804px">0</div><div class="td" style="left:1312px;top:804px">已通过</div><div class="td" style="left:1475px;top:804px">2025-11-28 18:29:14</div><div class="op" style="left:1697px;top:804px">推广</div><div class="op" style="left:1743px;top:804px">统计</div><div class="op" style="left:1789px;top:804px">订单</div><div class="op" style="left:1835px;top:804px">详情</div><div style="position:absolute;left:230px;top:873px;width:1652px;height:117px;background:#fff;border-bottom:1px solid #ebeef5"></div><div class="td" style="left:246px;top:921px">超值拼团专区</div><div style="position:absolute;left:412px;top:906px;width:50px;height:50px;overflow:hidden"><div style="position:absolute;left:0px;top:0px;width:50px;height:50px;background:linear-gradient(160deg,#dddad6,#cfccc8 60%,#c6c3bf);"></div><div style="position:absolute;left:6px;top:1px;width:12px;height:8px;background:#ebe5db;border-radius:50%"></div><div style="position:absolute;left:23px;top:0px;width:27px;height:22px;background:#e7ddc9;"></div><div style="position:absolute;left:31px;top:0px;width:19px;height:6px;background:#3c4341;"></div><div style="position:absolute;left:36px;top:12px;width:10px;height:2px;background:#8f8474;"></div><div style="position:absolute;left:0px;top:0px;width:14px;height:5px;background:#62b33a;"></div><div style="position:absolute;left:5px;top:19px;width:36px;height:15px;background:#e4d9c2;transform:rotate(22deg);border-radius:2px;box-shadow:0 1px 1px #b4ab98"></div><div style="position:absolute;left:12px;top:24px;width:13px;height:4px;background:#51678e;transform:rotate(22deg)"></div><div style="position:absolute;left:31px;top:30px;width:5px;height:3px;background:#e2673f;transform:rotate(22deg)"></div><div style="position:absolute;left:8px;top:13px;width:2px;height:2px;background:#e06a4b;"></div><div style="position:absolute;left:39px;top:30px;width:11px;height:12px;background:#f5f5f4;border-radius:50%;transform:rotate(-35deg)"></div><div style="position:absolute;left:1px;top:35px;width:21px;height:15px;background:#e3c9b6;"></div><div style="position:absolute;left:1px;top:35px;width:3px;height:6px;background:#f08b2c;"></div><div style="position:absolute;left:1px;top:42px;width:3px;height:6px;background:#f08b2c;"></div><div style="position:absolute;left:30px;top:40px;width:20px;height:10px;background:#e8e4df;opacity:.7"></div></div><div class="td" style="left:472px;top:921px">无线蓝牙机械键盘</div><div class="td" style="left:662px;top:921px">普通</div><div class="td" style="left:862px;top:885px;line-height:23px">开始：2025-11-28<br>18:25:40<br>结束：2026-05-01<br>23:25:40</div><div class="td" style="left:1062px;top:921px">进行中</div><div class="inp" style="left:1162px;top:915px;width:118px"></div><div class="td" style="left:1173px;top:921px">0</div><div class="td" style="left:1312px;top:921px">已通过</div><div class="td" style="left:1475px;top:921px">2025-11-28 18:26:33</div><div class="op" style="left:1697px;top:921px">推广</div><div class="op" style="left:1743px;top:921px">统计</div><div class="op" style="left:1789px;top:921px">订单</div><div class="op" style="left:1835px;top:921px">详情</div><div style="position:absolute;left:1904px;top:62px;width:6px;height:539px;background:#d3d4d8;border-radius:3px"></div><svg style="position:absolute;left:0;top:946px" width="10" height="10" viewBox="0 0 10 10"><path d="M0 2.5A7.5 7.5 0 0 0 7.5 10H0Z" fill="#fafafa"/><path d="M0 2.5A7.5 7.5 0 0 0 7.5 10" fill="none" stroke="#b4b4b4" stroke-width="0.8"/></svg><svg style="position:absolute;left:1902px;top:946px" width="10" height="10" viewBox="0 0 10 10"><path d="M10 2.5A7.5 7.5 0 0 1 2.5 10H10Z" fill="#fafafa"/><path d="M10 2.5A7.5 7.5 0 0 1 2.5 10" fill="none" stroke="#b4b4b4" stroke-width="0.8"/></svg></body></html>
